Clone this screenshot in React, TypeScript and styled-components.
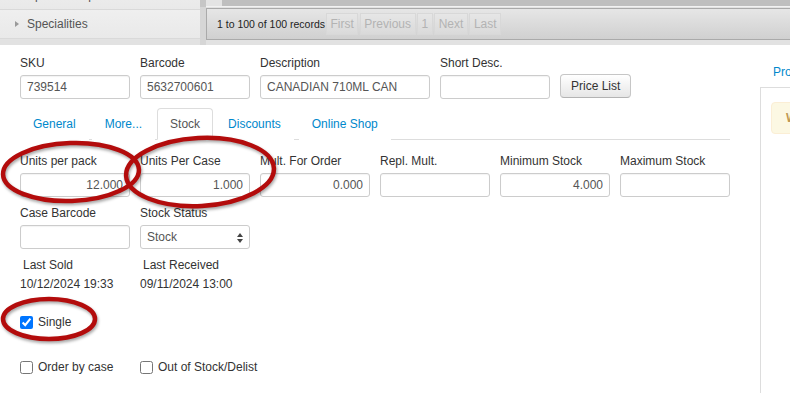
import React from 'react';
import styled, { createGlobalStyle } from 'styled-components';

const GlobalStyle = createGlobalStyle`
  html, body {
    margin: 0;
    padding: 0;
    overflow: hidden;
    background: #fff;
  }
  body {
    font-family: 'Liberation Sans', Arial, sans-serif;
    font-size: 12px;
    color: #333;
  }
`;

const Page = styled.div`
  position: relative;
  width: 790px;
  height: 393px;
  overflow: hidden;
`;

const Header = styled.div`
  display: flex;
  height: 45px;
  background: #e2e2e2;
  overflow: hidden;
`;

const Sidebar = styled.div`
  width: 200px;
  height: 39px;
  overflow: hidden;
  background: #ebebeb;
`;

const SideList = styled.div`
  margin-top: -19px;
`;

const SideItem = styled.div`
  display: flex;
  align-items: center;
  gap: 8px;
  height: 28px;
  padding-left: 15px;
  color: #555;
  font-size: 12px;
  background: linear-gradient(#efefef, #e9e9e9);
  border-bottom: 1px solid #d9d9d9;
`;

const Arrow = styled.span`
  display: inline-block;
  width: 0;
  height: 0;
  border-top: 3.5px solid transparent;
  border-bottom: 3.5px solid transparent;
  border-left: 4px solid #9a9a9a;
`;

const Splitter = styled.div`
  width: 6px;
  background: linear-gradient(#c6c6c6 0, #c6c6c6 7px, #d6d6d6 7px);
`;

const PagerArea = styled.div`
  flex: 1;
  display: flex;
  flex-direction: column;
`;

const ScrollTrack = styled.div`
  display: flex;
  height: 6px;
  background: #bfbfbf;
  border-bottom: 1px solid #f2f2f2;
`;

const ScrollArrow = styled.div`
  width: 16px;
  background: #e4e4e4;
`;

const Pager = styled.div`
  display: flex;
  align-items: center;
  height: 30px;
  margin-top: 1px;
  padding-left: 10px;
  border: 1px solid #aaa;
  border-right: none;
  background: linear-gradient(#e6e6e6, #d0d0d0);
`;

const PagerInfo = styled.span`
  font-size: 10.5px;
  color: #222;
  margin-right: 1px;
`;

const PagerButton = styled.span`
  display: flex;
  align-items: center;
  height: 20px;
  padding: 0 3.5px;
  margin-right: 1.5px;
  font-size: 12px;
  color: #b3b3b3;
  border: 1px solid #d8d8d8;
  background: rgba(255, 255, 255, 0.15);
`;

const Main = styled.div`
  display: flex;
`;

const Form = styled.div`
  width: 710px;
  padding: 10px 0 0 20px;
  display: flex;
  flex-direction: column;
`;

const Row = styled.div<{ $top?: number }>`
  display: flex;
  align-items: flex-end;
  gap: 10px;
  margin-top: ${({ $top }) => $top ?? 0}px;
`;

const Field = styled.div<{ $w?: number }>`
  display: flex;
  flex-direction: column;
  width: ${({ $w }) => $w ?? 110}px;
`;

const Label = styled.label`
  line-height: 16px;
  margin-bottom: 4px;
  color: #333;
  white-space: nowrap;
`;

const Input = styled.input<{ $right?: boolean }>`
  box-sizing: border-box;
  width: 100%;
  height: 24px;
  padding: 0 6px;
  border: 1px solid #ccc;
  border-radius: 3px;
  font-family: inherit;
  font-size: 12px;
  color: #555;
  text-align: ${({ $right }) => ($right ? 'right' : 'left')};
  box-shadow: inset 0 1px 1px rgba(0, 0, 0, 0.05);
`;

const SelectWrap = styled.div`
  position: relative;
`;

const Select = styled.select`
  box-sizing: border-box;
  width: 100%;
  height: 24px;
  padding: 0 6px;
  border: 1px solid #ccc;
  border-radius: 3px;
  background: #fff;
  font-family: inherit;
  font-size: 12px;
  color: #555;
  appearance: none;
`;

const SelectArrows = styled.svg`
  position: absolute;
  right: 7px;
  top: 8px;
  pointer-events: none;
`;

const Button = styled.button`
  height: 24px;
  margin-bottom: 1px;
  padding: 0 10px;
  border: 1px solid #c6c6c6;
  border-bottom-color: #b3b3b3;
  border-radius: 4px;
  background: linear-gradient(#ffffff, #e6e6e6);
  font-family: inherit;
  font-size: 12px;
  color: #333;
`;

const Tabs = styled.div`
  display: flex;
  height: 31px;
  margin-top: 9px;
  border-bottom: 1px solid #ddd;
`;

const Tab = styled.div<{ $active?: boolean; $gap?: number }>`
  display: flex;
  align-items: center;
  padding: 0 12px;
  margin-right: ${({ $gap }) => $gap ?? 2}px;
  margin-bottom: -1px;
  font-size: 12px;
  color: ${({ $active }) => ($active ? '#555' : '#0088cc')};
  border: 1px solid ${({ $active }) => ($active ? '#ddd' : 'transparent')};
  border-bottom-color: ${({ $active }) => ($active ? '#fff' : 'transparent')};
  border-radius: 4px 4px 0 0;
  background: #fff;
`;

const InfoBlock = styled.div`
  display: flex;
  flex-direction: column;
  width: 110px;
`;

const InfoLabel = styled.span`
  line-height: 16px;
  padding-left: 3px;
  white-space: nowrap;
`;

const InfoValue = styled.span`
  line-height: 16px;
  margin-top: 3px;
  white-space: nowrap;
`;

const Check = styled.label<{ $w?: number }>`
  display: flex;
  align-items: center;
  gap: 5px;
  width: ${({ $w }) => $w ?? 110}px;
  line-height: 16px;
  white-space: nowrap;
  input {
    margin: 0;
    width: 13px;
    height: 13px;
  }
`;

const Aside = styled.div`
  margin-left: 30px;
  padding-top: 19px;
  width: 60px;
`;

const AsideLink = styled.div`
  margin-left: 13px;
  color: #0088cc;
  font-size: 12px;
  line-height: 16px;
  white-space: nowrap;
`;

const AsideBox = styled.div`
  margin-top: 7px;
  height: 320px;
  padding: 14px 0 0 10px;
  border-left: 1px solid #ddd;
  border-top: 1px solid #ddd;
`;

const Alert = styled.div`
  height: 30px;
  padding-left: 14px;
  display: flex;
  align-items: center;
  background: #fcf8e3;
  border: 1px solid #fbeed5;
  border-radius: 4px;
  color: #c09853;
  font-weight: bold;
  white-space: nowrap;
`;

const Marks = styled.svg`
  position: absolute;
  left: 0;
  top: 0;
  pointer-events: none;
  filter: drop-shadow(1px 2px 1.5px rgba(0, 0, 0, 0.35));
`;

const stock = [
  { label: 'Units per pack', value: '12.000' },
  { label: 'Units Per Case', value: '1.000' },
  { label: 'Mult. For Order', value: '0.000' },
  { label: 'Repl. Mult.', value: '' },
  { label: 'Minimum Stock', value: '4.000' },
  { label: 'Maximum Stock', value: '' },
];

export default function App() {
  return (
    <Page>
      <GlobalStyle />
      <Header>
        <Sidebar>
          <SideList>
            <SideItem>
              <Arrow />
              Spirits &amp; Liqueurs
            </SideItem>
            <SideItem>
              <Arrow />
              Specialities
            </SideItem>
          </SideList>
        </Sidebar>
        <Splitter />
        <PagerArea>
          <ScrollTrack>
            <ScrollArrow />
          </ScrollTrack>
          <Pager>
            <PagerInfo>1 to 100 of 100 records</PagerInfo>
            <PagerButton>First</PagerButton>
            <PagerButton>Previous</PagerButton>
            <PagerButton>1</PagerButton>
            <PagerButton>Next</PagerButton>
            <PagerButton>Last</PagerButton>
          </Pager>
        </PagerArea>
      </Header>

      <Main>
        <Form>
          <Row>
            <Field>
              <Label>SKU</Label>
              <Input defaultValue="739514" />
            </Field>
            <Field>
              <Label>Barcode</Label>
              <Input defaultValue="5632700601" />
            </Field>
            <Field $w={170}>
              <Label>Description</Label>
              <Input defaultValue="CANADIAN 710ML CAN" />
            </Field>
            <Field>
              <Label>Short Desc.</Label>
              <Input defaultValue="" />
            </Field>
            <Button>Price List</Button>
          </Row>

          <Tabs>
            <Tab $gap={3}>General</Tab>
            <Tab>More...</Tab>
            <Tab $active>Stock</Tab>
            <Tab $gap={5}>Discounts</Tab>
            <Tab>Online Shop</Tab>
          </Tabs>

          <Row $top={13}>
            {stock.map((s) => (
              <Field key={s.label}>
                <Label>{s.label}</Label>
                <Input $right defaultValue={s.value} />
              </Field>
            ))}
          </Row>

          <Row $top={8}>
            <Field>
              <Label>Case Barcode</Label>
              <Input defaultValue="" />
            </Field>
            <Field>
              <Label>Stock Status</Label>
              <SelectWrap>
                <Select defaultValue="Stock">
                  <option>Stock</option>
                  <option>Non Stock</option>
                </Select>
                <SelectArrows width="6" height="10" viewBox="0 0 6 10">
                  <path d="M3 0 L6 4 L0 4 Z M0 6 L6 6 L3 10 Z" fill="#444" />
                </SelectArrows>
              </SelectWrap>
            </Field>
          </Row>

          <Row $top={8}>
            <InfoBlock>
              <InfoLabel>Last Sold</InfoLabel>
              <InfoValue>10/12/2024 19:33</InfoValue>
            </InfoBlock>
            <InfoBlock>
              <InfoLabel>Last Received</InfoLabel>
              <InfoValue>09/11/2024 13:00</InfoValue>
            </InfoBlock>
          </Row>

          <Row $top={22}>
            <Check>
              <input type="checkbox" defaultChecked />
              Single
            </Check>
          </Row>

          <Row $top={29}>
            <Check>
              <input type="checkbox" />
              Order by case
            </Check>
            <Check $w={160}>
              <input type="checkbox" />
              Out of Stock/Delist
            </Check>
          </Row>
        </Form>

        <Aside>
          <AsideLink>Product</AsideLink>
          <AsideBox>
            <Alert>Warning</Alert>
          </AsideBox>
        </Aside>
      </Main>

      <Marks width="790" height="393" viewBox="0 0 790 393">
        <g fill="none" stroke="#b30c0c" strokeWidth="4.5">
          <ellipse cx="71" cy="172" rx="68" ry="29" transform="rotate(-2 71 172)" />
          <ellipse cx="200" cy="172" rx="74" ry="34" transform="rotate(-3 200 172)" />
          <ellipse cx="49" cy="319" rx="46" ry="20" />
        </g>
      </Marks>
    </Page>
  );
}
